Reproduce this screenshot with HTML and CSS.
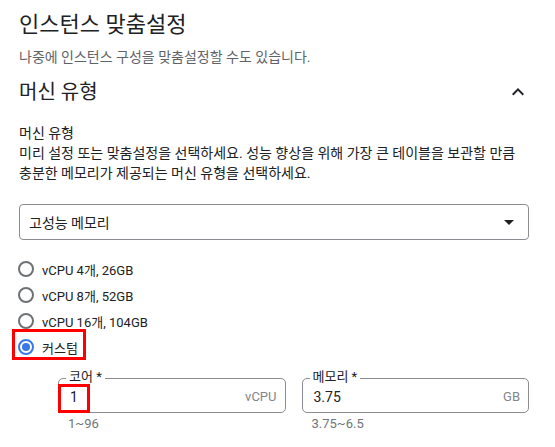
FILE: index.html
```html
<!DOCTYPE html>
<html lang="ko">
<head>
<meta charset="utf-8">
<title>인스턴스 맞춤설정</title>
<link rel="stylesheet" href="styles.css">
</head>
<body>
<div class="page">
  <h1 class="title">인스턴스 맞춤설정</h1>
  <p class="subtitle">나중에 인스턴스 구성을 맞춤설정할 수도 있습니다.</p>

  <div class="section-head">
    <h2 class="section-title">머신 유형</h2>
    <svg class="chevron" viewBox="0 0 24 24" width="24" height="24"><path d="M12 8l-6 6 1.41 1.41L12 10.83l4.59 4.58L18 14z"/></svg>
  </div>

  <div class="field-label">머신 유형</div>
  <p class="desc">미리 설정 또는 맞춤설정을 선택하세요. 성능 향상을 위해 가장 큰 테이블을 보관할 만큼 충분한 메모리가 제공되는 머신 유형을 선택하세요.</p>

  <div class="select">
    <span class="select-value">고성능 메모리</span>
    <svg class="select-arrow" viewBox="0 0 24 24" width="24" height="24"><path d="M7 10l5 5 5-5z"/></svg>
  </div>

  <div class="radios">
    <div class="radio"><span class="circle"></span><span class="radio-text">vCPU 4개, 26GB</span></div>
    <div class="radio"><span class="circle"></span><span class="radio-text">vCPU 8개, 52GB</span></div>
    <div class="radio"><span class="circle"></span><span class="radio-text">vCPU 16개, 104GB</span></div>
    <div class="radio radio-custom"><span class="circle checked"></span><span class="radio-text">커스텀</span></div>
  </div>

  <div class="fields">
    <div class="field-col">
      <div class="outlined highlight-value">
        <span class="floating">코어 *</span>
        <span class="value">1</span>
        <span class="suffix">vCPU</span>
      </div>
      <div class="helper">1~96</div>
    </div>
    <div class="field-col">
      <div class="outlined">
        <span class="floating">메모리 *</span>
        <span class="value">3.75</span>
        <span class="suffix">GB</span>
      </div>
      <div class="helper">3.75~6.5</div>
    </div>
  </div>
</div>
</body>
</html>
```
FILE: styles.css
```css
* { box-sizing: border-box; }
html, body { margin: 0; padding: 0; background: #fff; }
body {
  font-family: "Roboto", "Noto Sans CJK KR", sans-serif;
  color: #202124;
}
.page {
  width: 529px;
  padding: 11px 0 0 19px;
}
.title {
  margin: 0;
  font-size: 22px;
  line-height: 28px;
  font-weight: 400;
}
.subtitle {
  margin: 9px 0 0;
  font-size: 14px;
  line-height: 18px;
  color: #5f6368;
}
.section-head {
  margin-top: 13px;
  display: flex;
  align-items: center;
  justify-content: space-between;
  height: 26px;
}
.section-title {
  margin: 0;
  font-size: 20px;
  line-height: 26px;
  font-weight: 400;
}
.chevron { fill: #202124; margin-right: -1px; }
.field-label {
  margin-top: 19px;
  font-size: 14px;
  line-height: 18px;
}
.desc {
  margin: 2px 0 0;
  font-size: 14px;
  line-height: 19.5px;
}
.select {
  margin-top: 21px;
  height: 36px;
  border: 1px solid #8a8d91;
  border-radius: 4px;
  display: flex;
  align-items: center;
  justify-content: space-between;
  padding: 0 7px 0 9px;
  font-size: 14px;
}
.select-arrow { fill: #202124; }
.radios {
  margin-top: 16px;
  display: flex;
  flex-direction: column;
}
.radio {
  height: 26px;
  display: flex;
  align-items: center;
  gap: 8px;
  font-size: 13px;
}
.circle {
  width: 16px;
  height: 16px;
  margin-left: -1px;
  border: 2px solid #6f7275;
  border-radius: 50%;
  display: flex;
  align-items: center;
  justify-content: center;
}
.circle.checked { border-color: #3b78e7; }
.circle.checked::after {
  content: "";
  width: 8px;
  height: 8px;
  border-radius: 50%;
  background: #3b78e7;
}
.radio-custom {
  position: relative;
  width: fit-content;
}
.radio-custom::after {
  content: "";
  position: absolute;
  left: -7px;
  right: -8px;
  top: -5px;
  bottom: 0;
  border: 3px solid #f00;
}
.fields {
  margin: 18px 0 0 39px;
  display: grid;
  grid-template-columns: 1fr 1fr;
  gap: 16px;
}
.outlined {
  position: relative;
  height: 35px;
  border: 1px solid #8a8d91;
  border-radius: 5px;
  display: flex;
  align-items: center;
  justify-content: space-between;
  padding: 2px 8px 0 11px;
}
.floating {
  position: absolute;
  left: 7px;
  top: -10px;
  padding: 0 3px;
  background: #fff;
  font-size: 13px;
  line-height: 16px;
}
.value { font-size: 14px; }
.suffix { font-size: 13px; color: #80868b; }
.highlight-value::after {
  content: "";
  position: absolute;
  left: -1px;
  top: 5px;
  width: 26px;
  height: 23px;
  border: 3px solid #f00;
}
.helper {
  margin: 3px 0 0 10px;
  font-size: 13px;
  line-height: 16px;
  color: #70757a;
}
```
